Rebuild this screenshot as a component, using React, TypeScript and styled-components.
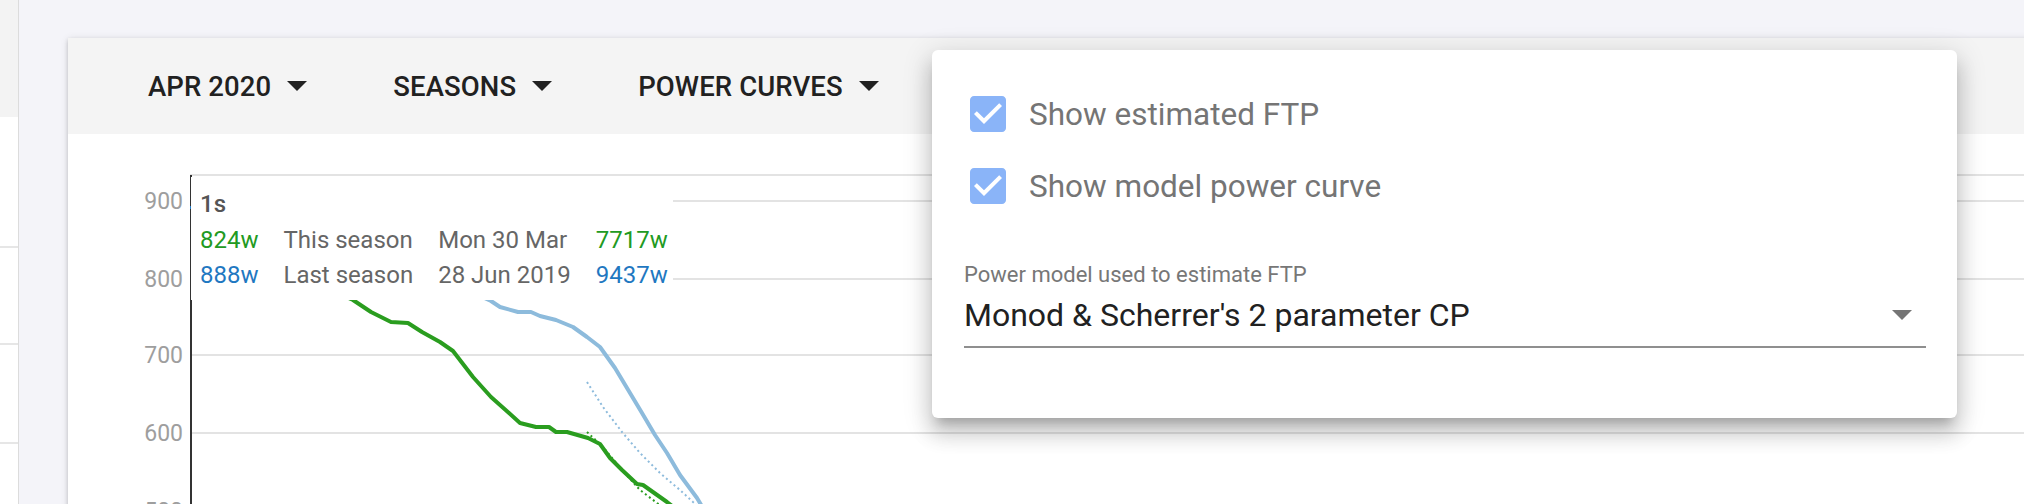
import React from 'react';
import styled, {createGlobalStyle} from 'styled-components';

const Global = createGlobalStyle`
  html, body {
    margin: 0;
    padding: 0;
    background: #f4f4f9;
    font-family: Roboto, "Liberation Sans", Arial, sans-serif;
    overflow: hidden;
  }
`

const Page = styled.div`
  position: relative;
  display: flex;
  width: 2024px;
  height: 504px;
  overflow: hidden;
`

const SideStrip = styled.div`
  width: 18px;
  flex-shrink: 0;
  display: flex;
  flex-direction: column;
  background: #fff;
  border-right: 1px solid #dcdcdc;
`

const SideHead = styled.div`
  height: 117px;
  background: #f3f3f3;
`

const SideRow = styled.div<{h: number}>`
  height: ${p => p.h}px;
  border-bottom: 2px solid #e6e6e6;
  flex-shrink: 0;
`

const Main = styled.div`
  flex: 1;
  padding: 38px 0 0 49px;
  min-width: 0;
`

const Card = styled.div`
  margin-right: -24px;
  height: 480px;
  background: #fff;
  box-shadow: 0 2px 4px rgba(0,0,0,0.18), 0 1px 8px rgba(0,0,0,0.10);
  display: flex;
  flex-direction: column;
`

const Toolbar = styled.div`
  height: 96px;
  flex-shrink: 0;
  background: #f4f4f4;
  display: flex;
  align-items: center;
  padding-left: 80px;
  gap: 86px;
`

const MenuButton = styled.div`
  display: flex;
  align-items: center;
  gap: 16px;
  font-size: 27.5px;
  font-weight: 500;
  letter-spacing: 0.1px;
  text-transform: uppercase;
  color: #212121;
`

const ChartBody = styled.div`
  position: relative;
  flex: 1;
`

const Tooltip = styled.div`
  position: absolute;
  left: 123px;
  top: 43px;
  width: 482px;
  height: 123px;
  background: #fff;
  padding: 13px 0 0 9px;
  box-sizing: border-box;
  color: #666;
`

const TipTitle = styled.div`
  font-size: 24px;
  line-height: 28px;
  font-weight: 500;
  color: #555;
  margin-bottom: 5px;
`

const TipGrid = styled.div`
  display: grid;
  grid-template-columns: auto auto auto auto;
  justify-content: start;
  column-gap: 25px;
  font-size: 24px;
  line-height: 35px;
`

const TipCell = styled.span<{c?: string}>`
  color: ${p => p.c || '#666'};
`

const Popup = styled.div`
  position: absolute;
  left: 932px;
  top: 50px;
  width: 1025px;
  height: 368px;
  background: #fff;
  border-radius: 6px;
  box-sizing: border-box;
  padding: 28px 31px 0 32px;
  box-shadow: 0 10px 10px -6px rgba(0,0,0,0.2), 0 16px 20px 2px rgba(0,0,0,0.14), 0 6px 28px 4px rgba(0,0,0,0.12);
`

const CheckRow = styled.label`
  display: flex;
  align-items: center;
  height: 72px;
  gap: 17px;
  font-size: 31.5px;
  color: #757575;
`

const SelectBox = styled.div`
  margin-top: 40px;
`

const SelectLabel = styled.div`
  font-size: 22px;
  line-height: 25px;
  color: #777;
`

const SelectValue = styled.div`
  margin-top: 10px;
  display: flex;
  align-items: center;
  justify-content: space-between;
  font-size: 32px;
  line-height: 36px;
  color: #212121;
  padding: 0 14px 13px 0;
  border-bottom: 2px solid #8f8f8f;
`

const Caret = ({color = '#212121'}: {color?: string}) => (
  <svg width="20" height="10" viewBox="0 0 20 10">
    <polygon points="0,0 20,0 10,10" fill={color}/>
  </svg>
)

const CheckIcon = () => (
  <svg width="48" height="48" viewBox="0 0 24 24">
    <path fill="#8ab4f8" d="M19 3H5c-1.11 0-2 .9-2 2v14c0 1.1.89 2 2 2h14c1.11 0 2-.9 2-2V5c0-1.1-.89-2-2-2z"/>
    <path fill="#fff" d="M10 17l-5-5 1.41-1.41L10 14.17l7.59-7.59L19 8l-9 9z"/>
  </svg>
)

const grid = [175, 201, 279, 355, 433, 511]
const yLabels: [string, number][] = [['900', 201], ['800', 279], ['700', 355], ['600', 433], ['500', 511]]

const green = [[300,260],[330,290],[353,300],[371,312],[391,322],[408,323],[422,332],[440,342],[453,351],[473,377],[491,397],[509,413],[520,423],[536,427],[549,427],[556,432],[567,432],[588,438],[600,444],[610,458],[622,470],[637,484],[643,485],[667,502],[690,520]]
const blue = [[440,260],[480,296],[491,301],[500,307],[518,312],[531,312],[540,316],[556,320],[573,327],[587,337],[600,347],[615,368],[630,393],[642,413],[655,435],[667,453],[680,475],[697,498],[710,520]]
const blueModel = [[587,382],[603,407],[622,432],[640,453],[660,473],[680,490],[693,502],[715,520]]
const greenModel = [[587,432],[603,447],[622,470],[640,490],[657,503],[680,520]]

const pts = (a: number[][]) => a.map(p => p.join(',')).join(' ')

function Chart() {
  return (
    <svg width="1980" height="370" viewBox="68 134 1980 370">
      {grid.map(y => <line key={y} x1={190} x2={2048} y1={y} y2={y} stroke="#e3e3e3" strokeWidth={2}/>)}
      {yLabels.map(([t, y]) => (
        <text key={t} x={183} y={y + 8} textAnchor="end" fontSize={23} fill="#9e9e9e" fontFamily="Roboto, sans-serif">{t}</text>
      ))}
      <polyline points={pts(blue)} fill="none" stroke="#8dbbdc" strokeWidth={4} strokeLinejoin="round"/>
      <polyline points={pts(blueModel)} fill="none" stroke="#8dbbdc" strokeWidth={2} strokeDasharray="2 3"/>
      <polyline points={pts(green)} fill="none" stroke="#2a9d1f" strokeWidth={4} strokeLinejoin="round"/>
      <polyline points={pts(greenModel)} fill="none" stroke="#2a9d1f" strokeWidth={2} strokeDasharray="2 3"/>
      <line x1={191} x2={191} y1={175} y2={504} stroke="#333" strokeWidth={2}/>
      <rect x={190} y={206} width={2} height={3} fill="#1f78c1"/>
      <rect x={191} y={256} width={2} height={4} fill="#2a9d1f"/>
    </svg>
  )
}

export default function App() {
  return (
    <Page>
      <Global/>
      <SideStrip>
        <SideHead/>
        <SideRow h={129}/>
        <SideRow h={95}/>
        <SideRow h={97}/>
      </SideStrip>
      <Main>
        <Card>
          <Toolbar>
            <MenuButton>Apr 2020 <Caret/></MenuButton>
            <MenuButton>Seasons <Caret/></MenuButton>
            <MenuButton>Power curves <Caret/></MenuButton>
          </Toolbar>
          <ChartBody>
            <Chart/>
            <Tooltip>
              <TipTitle>1s</TipTitle>
              <TipGrid>
                <TipCell c="#229a22">824w</TipCell>
                <TipCell>This season</TipCell>
                <TipCell>Mon 30 Mar</TipCell>
                <TipCell c="#229a22">7717w</TipCell>
                <TipCell c="#1f78c1">888w</TipCell>
                <TipCell>Last season</TipCell>
                <TipCell>28 Jun 2019</TipCell>
                <TipCell c="#1f78c1">9437w</TipCell>
              </TipGrid>
            </Tooltip>
          </ChartBody>
        </Card>
      </Main>
      <Popup>
        <CheckRow><CheckIcon/>Show estimated FTP</CheckRow>
        <CheckRow><CheckIcon/>Show model power curve</CheckRow>
        <SelectBox>
          <SelectLabel>Power model used to estimate FTP</SelectLabel>
          <SelectValue>
            <span>Monod &amp; Scherrer's 2 parameter CP</span>
            <Caret color="#757575"/>
          </SelectValue>
        </SelectBox>
      </Popup>
    </Page>
  )
}
